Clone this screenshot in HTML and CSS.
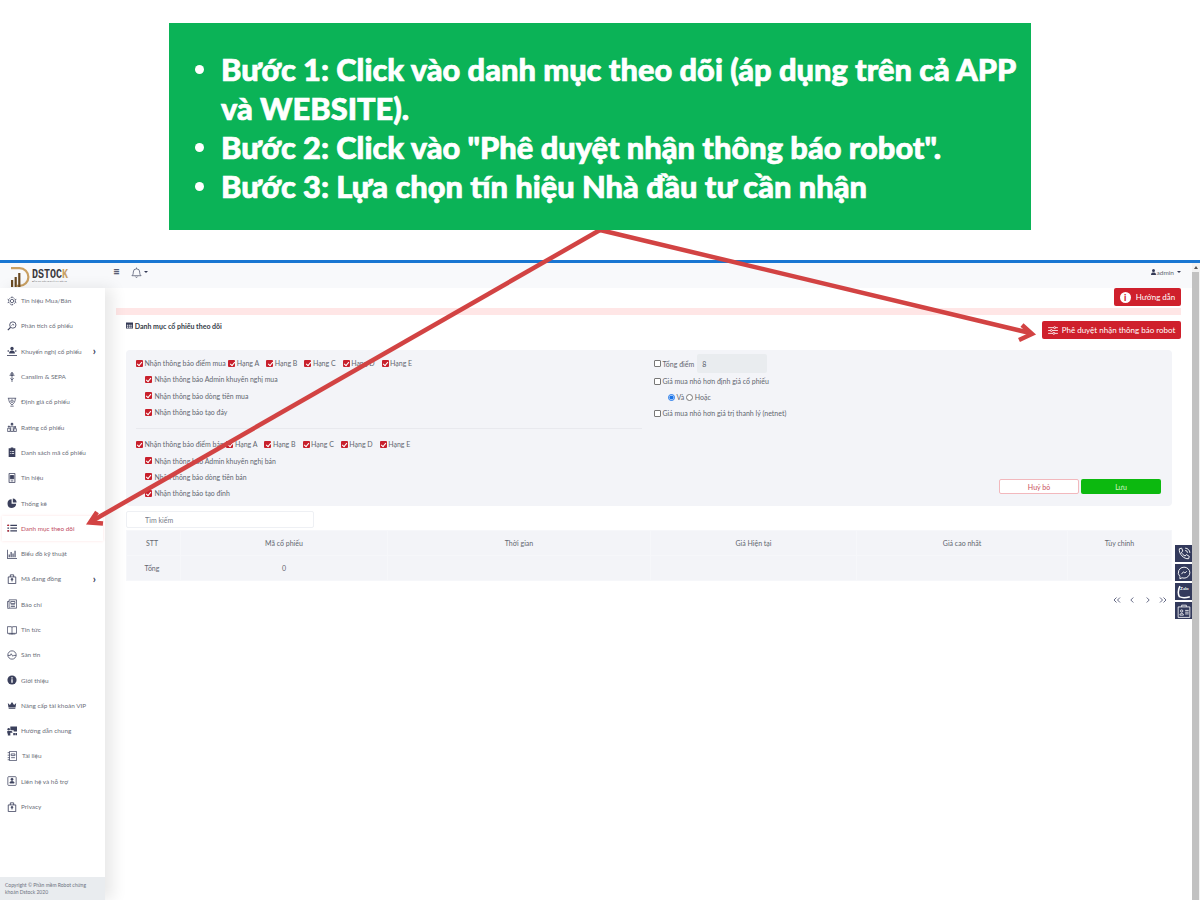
FILE: index.html
```html
<!DOCTYPE html>
<html lang="vi">
<head>
  <meta charset="UTF-8" />
  <title>Danh mục cổ phiếu theo dõi</title>
  <link rel="stylesheet" href="styles.css">
</head>
<body>
  <!-- Green instruction box -->
  <div class="banner">
    <ul>
      <li><span>Bước 1: Click vào danh mục theo dõi (áp dụng trên cả APP và WEBSITE).</span></li>
      <li><span>Bước 2: Click vào "Phê duyệt nhận thông báo robot".</span></li>
      <li><span>Bước 3: Lựa chọn tín hiệu Nhà đầu tư cần nhận</span></li>
    </ul>
  </div>

  <div class="app">
    <div class="app-body">
      <header class="topbar">
        <div class="logo">
          <svg width="21" height="20" viewBox="0 0 21 20">
            <path d="M1 0h8.500a10 10 0 0 1 0 20H7v-2.200h2.500a7.800 7.800 0 0 0 0-15.600H1z" fill="#c9a063"/>
            <path d="M1 13h2.200v7H1zM4.600 10h2.200v10H4.600zM8.200 6h2.200v14H8.200z" fill="#6a4a22"/>
          </svg>
          <div>
            <div class="logo-name">DSTOC<span>K</span></div>
            <div class="logo-tag">ĐẦU TƯ CÙNG THÀNH CÔNG</div>
          </div>
        </div>
        <div class="bars">≡</div>
        <svg class="bell" width="11" height="11" viewBox="0 0 12 12" fill="none" stroke="#4a4f68" stroke-width=".8">
          <path d="M1 9.500c1.200-1 1.500-2 1.500-4a3.500 3.500 0 0 1 7 0c0 2 .3 3 1.500 4zM6 2V.6M4.800 10.500a1.300 1.300 0 0 0 2.400 0"/>
        </svg>
        <span class="caret"></span>
        <div class="admin">
          <svg width="5" height="6" viewBox="0 0 10 12" fill="#343a56"><circle cx="5" cy="3" r="3"/><path d="M0 12c0-4 2-5 5-5s5 1 5 5z"/></svg>
          admin <span class="caret"></span>
        </div>
      </header>

      <div class="columns">
        <nav class="sidebar">
          <ul class="menu">
            <li><svg viewBox="0 0 12 12" fill="none" stroke="#3b405c" stroke-width=".9"><circle cx="6" cy="6" r="2"/><circle cx="6" cy="6" r="4.200" stroke-dasharray="1.500 1"/><path d="M6 .5v2M6 9.500v2M.8 4l2 1M9.200 7l2 1M.8 8l2-1M9.200 5l2-1"/></svg><span>Tín hiệu Mua/Bán</span></li>
            <li><svg viewBox="0 0 12 12" fill="none" stroke="#3b405c" stroke-width="1"><circle cx="7" cy="4.800" r="3.800"/><path d="M4.200 7.600 1 11" stroke-width="1.500"/><path d="M5.500 5.500 7 4l1.500 1"/></svg><span>Phân tích cổ phiếu</span></li>
            <li><svg viewBox="0 0 12 12" fill="#3b405c"><circle cx="6" cy="3" r="2"/><path d="M2.500 9c0-2.500 1.500-3.500 3.500-3.500S9.500 6.500 9.500 9z"/><circle cx="1.500" cy="6" r="1"/><circle cx="10.500" cy="6" r="1"/><path d="M0 11h12v1H0z"/></svg><span>Khuyến nghị cổ phiếu</span><b>›</b></li>
            <li><svg viewBox="0 0 12 12" fill="none" stroke="#3b405c" stroke-width=".9"><path d="M6 0v12M3 4h6M4 7.500l2 2 2-2"/><circle cx="6" cy="2.500" r="1.500"/></svg><span>Canslim &amp; SEPA</span></li>
            <li><svg viewBox="0 0 12 12" fill="none" stroke="#3b405c" stroke-width=".9"><path d="M1 1.500h10M2 1.500c0 4 1.500 6 4 8 2.500-2 4-4 4-8"/><circle cx="6" cy="5" r="1.500"/><path d="M4 11h4"/></svg><span>Định giá cổ phiếu</span></li>
            <li><svg viewBox="0 0 12 12" fill="none" stroke="#3b405c" stroke-width=".9"><path d="M.8 7.500h3v4h-3zM4.500 5h3v6.500h-3zM8.200 8h3v3.500h-3z"/><circle cx="6" cy="2.500" r="1.200" fill="#3b405c"/><circle cx="2.300" cy="5.500" r=".8" fill="#3b405c"/><circle cx="9.700" cy="6" r=".8" fill="#3b405c"/></svg><span>Rating cổ phiếu</span></li>
            <li><svg viewBox="0 0 12 12" fill="#3b405c"><path d="M2 1.500h2.500V.5h3v1H10V12H2z"/><path d="M3.500 5h1v1h-1zM5.500 5h3v1h-3zM3.500 7.500h1v1h-1zM5.500 7.500h3v1h-3z" fill="#fff"/></svg><span>Danh sách mã cổ phiếu</span></li>
            <li><svg viewBox="0 0 12 12" fill="none" stroke="#3b405c" stroke-width="1"><path d="M2.500.5h7v11h-7z"/><path d="M4 3h4v4H4z" fill="#3b405c"/><path d="M4.500 9.500h3"/></svg><span>Tín hiệu</span></li>
            <li><svg viewBox="0 0 12 12" fill="#3b405c"><path d="M5.500 1.500v5.500h5.500A5.200 5.200 0 1 1 5.500 1.500z"/><path d="M7 .5a4.700 4.700 0 0 1 4.500 5H7z"/></svg><span>Thống kê</span></li>
            <li class="active"><svg viewBox="0 0 12 12" fill="#3b405c"><path d="M.5 2h2v1.500h-2zM4 2h8v1.500H4zM.5 5.300h2v1.500h-2zM4 5.300h8v1.500H4zM.5 8.600h2v1.500h-2zM4 8.600h8v1.500H4z"/><path d="M.5 2h2v1.500h-2zM.5 8.600h2v1.500h-2z" fill="#c8202c"/></svg><span>Danh mục theo dõi</span></li>
            <li><svg viewBox="0 0 12 12" fill="#3b405c"><path d="M.3 1h.9v10.200H12v.8H.3zM2 6.500h1.300V10H2zM4.300 3.500h1.300V10H4.300zM6.600 5.500h1.300V10H6.600zM9 2h1.300v8H9z"/></svg><span>Biểu đồ kỹ thuật</span></li>
            <li><svg viewBox="0 0 12 12" fill="none" stroke="#3b405c" stroke-width="1"><path d="M1.500 3.500h9v8h-9z"/><path d="M4 3.500V1h4v2.500"/><circle cx="6" cy="6.300" r="1" fill="#3b405c"/><path d="M6 7v2"/></svg><span>Mã đang đồng</span><b>›</b></li>
            <li><svg viewBox="0 0 12 12" fill="none" stroke="#3b405c" stroke-width=".9"><path d="M2.500 1h9v10h-9zM2.500 3H.5v7a1 1 0 0 0 2 1"/><path d="M4.500 3h5v2.500h-5zM4.500 7h5M4.500 9h5"/></svg><span>Báo chí</span></li>
            <li><svg viewBox="0 0 12 12" fill="none" stroke="#3b405c" stroke-width=".9"><path d="M.5 2h4.500a1 1 0 0 1 1 1 1 1 0 0 1 1-1h4.500v8H7a1 1 0 0 0-1 1 1 1 0 0 0-1-1H.5zM6 3v8M2 10.800h8"/></svg><span>Tin tức</span></li>
            <li><svg viewBox="0 0 12 12" fill="none" stroke="#3b405c" stroke-width=".9"><circle cx="6" cy="6" r="5"/><path d="M1 6.500h3l1-2 2 3 1-1h3"/></svg><span>Sàn tin</span></li>
            <li><svg viewBox="0 0 12 12"><circle cx="6" cy="6" r="5.500" fill="#3b405c"/><path d="M5.200 5.200h1.600v4H5.200zM5.200 2.700h1.600v1.500H5.200z" fill="#fff"/></svg><span>Giới thiệu</span></li>
            <li><svg viewBox="0 0 12 12" fill="#3b405c"><path d="M1 3.500 3.500 6 6 2.500 8.500 6 11 3.500 10.300 9H1.700z"/><path d="M2 9.500h8v1H2z"/></svg><span>Nâng cấp tài khoản VIP</span></li>
            <li><svg viewBox="0 0 12 12" fill="#3b405c"><path d="M4 .5h8v6H8V5H4z"/><circle cx="2" cy="4" r="1.500"/><path d="M.3 6h5L6.500 7v1H4v3.500H1V9H.3zM7.500 8.500h2V11h-2zM10 8.500h2V11h-2z"/></svg><span>Hướng dẫn chung</span></li>
            <li class="shift"><svg viewBox="0 0 12 12" fill="none" stroke="#3b405c" stroke-width=".9"><path d="M3 .5h8.500v11H3zM3 2H.8M3 5H.8M3 8H.8M3 10.500H.8"/><path d="M5 3.500h4.500v2H5zM5 8h4.500"/></svg><span>Tài liệu</span></li>
            <li><svg viewBox="0 0 12 12" fill="none" stroke="#3b405c" stroke-width=".9"><rect x="1" y=".8" width="10" height="10.500" rx="1"/><circle cx="6" cy="4" r="1.300" fill="#3b405c"/><path d="M3.500 8.500c0-1.500 1-2 2.500-2s2.500.5 2.500 2z" fill="#3b405c"/></svg><span>Liên hệ và hỗ trợ</span></li>
            <li><svg viewBox="0 0 12 12" fill="none" stroke="#3b405c" stroke-width="1"><path d="M1.500 3.500h9v8h-9z"/><path d="M4 3.500V1h4v2.500"/><circle cx="6" cy="6.300" r="1" fill="#3b405c"/><path d="M6 7v2"/></svg><span>Privacy</span></li>
          </ul>
          <div class="copyright">Copyright © Phần mềm Robot chứng khoán Dstock 2020</div>
        </nav>

        <main class="content">
          <div class="guide-row">
            <button class="btn-red btn-guide"><i>i</i>Hướng dẫn</button>
          </div>
          <div class="alert-bar"></div>
          <div class="title-row">
            <div class="page-title">
              <svg width="7" height="7" viewBox="0 0 12 12" fill="#343a56"><path d="M0 1h12v10H0zM1.500 4.500v2h2.500v-2zM5.300 4.500v2h2.500v-2zM9 4.500v2h1.500v-2zM1.500 7.700v2h2.500v-2zM5.300 7.700v2h2.500v-2zM9 7.700v2h1.500v-2z" fill-rule="evenodd"/></svg>
              Danh mục cổ phiếu theo dõi
            </div>
            <button class="btn-red btn-approve">
              <svg width="10" height="9" viewBox="0 0 12 11" fill="none" stroke="#fff" stroke-width="1"><path d="M0 2h12M0 5.500h12M0 9h12"/><circle cx="8" cy="2" r="1.200" fill="#cf202c"/><circle cx="4" cy="5.500" r="1.200" fill="#cf202c"/><circle cx="7" cy="9" r="1.200" fill="#cf202c"/></svg>
              Phê duyệt nhận thông báo robot
            </button>
          </div>

          <section class="panel">
            <div class="panel-left">
              <div class="check-row grades">
                <label><input type="checkbox" checked>Nhận thông báo điểm mua</label>
                <label><input type="checkbox" checked>Hạng A</label>
                <label><input type="checkbox" checked>Hạng B</label>
                <label><input type="checkbox" checked>Hạng C</label>
                <label><input type="checkbox" checked>Hạng D</label>
                <label><input type="checkbox" checked>Hạng E</label>
              </div>
              <div class="check-row sub"><label><input type="checkbox" checked>Nhận thông báo Admin khuyến nghị mua</label></div>
              <div class="check-row sub"><label><input type="checkbox" checked>Nhận thông báo dòng tiền mua</label></div>
              <div class="check-row sub"><label><input type="checkbox" checked>Nhận thông báo tạo đáy</label></div>
              <hr>
              <div class="check-row grades">
                <label><input type="checkbox" checked>Nhận thông báo điểm bán</label>
                <label><input type="checkbox" checked>Hạng A</label>
                <label><input type="checkbox" checked>Hạng B</label>
                <label><input type="checkbox" checked>Hạng C</label>
                <label><input type="checkbox" checked>Hạng D</label>
                <label><input type="checkbox" checked>Hạng E</label>
              </div>
              <div class="check-row sub"><label><input type="checkbox" checked>Nhận thông báo Admin khuyến nghị bán</label></div>
              <div class="check-row sub"><label><input type="checkbox" checked>Nhận thông báo dòng tiền bán</label></div>
              <div class="check-row sub"><label><input type="checkbox" checked>Nhận thông báo tạo đỉnh</label></div>
            </div>
            <div class="panel-right">
              <div class="check-row score"><label><input type="checkbox">Tổng điểm</label><input class="score-input" type="text" value="8" disabled></div>
              <div class="check-row"><label><input type="checkbox">Giá mua nhỏ hơn định giá cổ phiếu</label></div>
              <div class="check-row radios">
                <label><input type="radio" name="logic" checked>Và</label>
                <label><input type="radio" name="logic">Hoặc</label>
              </div>
              <div class="check-row"><label><input type="checkbox">Giá mua nhỏ hơn giá trị thanh lý (netnet)</label></div>
              <div class="actions">
                <button class="btn-cancel">Huỷ bỏ</button>
                <button class="btn-save">Lưu</button>
              </div>
            </div>
          </section>

          <input class="search" type="text" placeholder="Tìm kiếm">

          <table class="stocks">
            <tr><th>STT</th><th>Mã cổ phiếu</th><th>Thời gian</th><th>Giá Hiện tại</th><th>Giá cao nhất</th><th>Tùy chỉnh</th></tr>
            <tr><td>Tổng</td><td>0</td><td></td><td></td><td></td><td></td></tr>
          </table>

          <div class="pager">
            <svg viewBox="0 0 8 6"><path d="M3.500.5 1 3l2.500 2.500M7 .5 4.500 3 7 5.500"/></svg>
            <svg viewBox="0 0 8 6"><path d="M5.300.5 2.800 3l2.500 2.500"/></svg>
            <svg viewBox="0 0 8 6"><path d="M2.700.5 5.200 3 2.700 5.500"/></svg>
            <svg viewBox="0 0 8 6"><path d="M1 .5 3.500 3 1 5.500M4.500.5 7 3 4.500 5.500"/></svg>
          </div>
        </main>
      </div>
    </div>
    <div class="scrollbar"><div class="scroll-thumb"></div></div>

    <!-- Contact buttons stuck to the right edge -->
    <div class="float-btns">
      <a><svg viewBox="0 0 12 12" fill="none" stroke="#fff" stroke-width=".8"><path d="M2 1.500 4 1l1 2.500-1.200 1c.6 1.500 1.700 2.600 3.200 3.200l1-1.200L10.500 8 10 10c-4 .6-8.600-4-8-8.500zM7 1a4 4 0 0 1 4 4M7 3a2 2 0 0 1 2 2"/></svg></a>
      <a><svg viewBox="0 0 12 12" fill="none" stroke="#fff" stroke-width=".8"><path d="M6 1a5 4.700 0 0 1 0 9.400c-.6 0-1.200-.1-1.700-.3L2.500 11V9A4.700 4.700 0 0 1 6 1z"/><path d="M3.800 7 5.500 5l1.300 1 1.500-1.500"/></svg></a>
      <a class="zalo"><svg viewBox="0 0 12 12" fill="none" stroke="#fff" stroke-width="1.300"><path d="M2.500 1C1 4 1 8 2 10c2 1 6 1 9 0"/></svg><em>Zalo</em></a>
      <a><svg viewBox="0 0 12 12" fill="none" stroke="#fff" stroke-width=".7"><path d="M1 2.500h10v9H1zM4 2.500V1h4v1.500"/><circle cx="4" cy="6" r="1"/><path d="M2.500 9.500c0-1 .6-1.500 1.500-1.500s1.500.5 1.500 1.500zM7 5.500h3M7 7h3M7 8.500h3"/></svg></a>
    </div>
  </div>

  <!-- Red arrows drawn over everything but the green box -->
  <svg class="arrows" width="1200" height="900" viewBox="0 0 1200 900" fill="none" stroke="#d24343" stroke-width="4.500">
    <path d="M600 230 92 521"/>
    <path d="M97 512 90 522.500 103 523.500" stroke-linejoin="miter"/>
    <path d="M600 230 1030 333"/>
    <path d="M1022 325 1032 334 1019 340"/>
  </svg>
</body>
</html>
```
FILE: styles.css
```css
* {
  box-sizing: border-box;
}

html,
body {
  height: 900px;
}

body {
  margin: 0;
  background: #fff;
  font-family: 'Lato', 'Noto Sans', sans-serif;
  overflow: hidden;
  position: relative;
  display: flex;
  flex-direction: column;
}

/* Banner */
.banner {
  position: relative;
  z-index: 3;
  width: 862px;
  height: 207px;
  margin: 23px auto 0;
  padding: 27px 0 0 26px;
  background: #0bb357;
  color: #fff;
  font-size: 30.800px;
  font-weight: 900;
  line-height: 39px;
  -webkit-text-stroke: 0.7px #fff;
}

.banner ul {
  margin: 0;
  padding: 0;
  list-style: none;
}

.banner li {
  display: flex;
  gap: 17px;
}

.banner li::before {
  content: '';
  flex: 0 0 9px;
  height: 9px;
  margin-top: 15px;
  border-radius: 50%;
  background: #fff;
}

/* App screenshot */
.app {
  position: relative;
  display: flex;
  flex: 1;
  margin-top: 30px;
  border-top: 3px solid #1976d2;
  min-height: 0;
  font-size: 7px;
  color: #62666f;
}

.app-body {
  display: flex;
  flex-direction: column;
  flex: 1;
  min-width: 0;
}

.scrollbar {
  position: relative;
  flex: 0 0 8px;
  padding-top: 9px;
  background: #f1f1f1;
}

.scrollbar::before {
  content: '';
  position: absolute;
  top: 3px;
  left: 2px;
  border-bottom: 3px solid #555;
  border-left: 2px solid transparent;
  border-right: 2px solid transparent;
}

.scroll-thumb {
  width: 7px;
  height: 100%;
  background: #c1c1c1;
}

.topbar {
  display: flex;
  align-items: center;
  height: 25px;
  padding: 0 11px 7px 10px;
  background: #f8f9fb;
}

.logo {
  display: flex;
  align-items: center;
  align-self: flex-end;
  gap: 1px;
  width: 103px;
  margin-bottom: -6px;
}

.logo-name {
  font-family: 'Liberation Mono', monospace;
  font-size: 12.500px;
  font-weight: 700;
  line-height: 10px;
  color: #3b3a40;
  transform: scaleX(0.8);
  transform-origin: left center;
}

.logo-name span {
  color: #c9a063;
}

.logo-tag {
  font-size: 2.500px;
  line-height: 4px;
  color: #666;
}

.bars {
  width: 18px;
  font-size: 12px;
  line-height: 12px;
  color: #343a56;
}

.caret {
  display: inline-block;
  margin-left: 2px;
  border-top: 2px solid #343a56;
  border-left: 2px solid transparent;
  border-right: 2px solid transparent;
}

.admin {
  margin-left: auto;
  font-size: 6.500px;
  display: flex;
  align-items: center;
  gap: 1px;
}

.columns {
  display: flex;
  flex: 1;
  min-height: 0;
}

/* Sidebar */
.sidebar {
  position: relative;
  z-index: 1;
  display: flex;
  flex-direction: column;
  flex: 0 0 105px;
  background: #fff;
  box-shadow: 8px 0 14px rgba(0, 0, 0, 0.09);
}

.menu {
  flex: 1;
  margin: 0;
  padding: 0;
  list-style: none;
}

.menu li {
  display: flex;
  align-items: center;
  gap: 4px;
  height: 25.300px;
  padding-left: 7px;
  font-size: 6.400px;
  color: #6b6f7a;
}

.menu li svg {
  flex: 0 0 10px;
  width: 10px;
  height: 10px;
}

.menu li b {
  margin-left: auto;
  margin-right: 9px;
  font-size: 11px;
  line-height: 8px;
  color: #343a56;
}

.menu li.shift {
  gap: 5px;
}

.menu li.active {
  margin: 0 2px;
  padding-left: 5px;
  background: #fff;
  box-shadow: 0 0 3px #fde3e3;
  color: #c04a5e;
}

.copyright {
  height: 23px;
  padding: 5px;
  background: #e9ecef;
  font-size: 5px;
  line-height: 7px;
  color: #6d7280;
}

/* Main content */
.content {
  flex: 1;
  min-width: 0;
  padding: 0 11px;
}

.guide-row {
  display: flex;
  justify-content: flex-end;
}

.btn-red {
  display: flex;
  align-items: center;
  justify-content: center;
  height: 18px;
  padding: 0;
  border: 0;
  border-radius: 2px;
  background: #cf202c;
  color: #fff;
  font-family: inherit;
  font-size: 8px;
}

.btn-guide {
  width: 67px;
  gap: 5px;
}

.btn-guide i {
  width: 11px;
  height: 11px;
  border-radius: 50%;
  background: #fff;
  color: #cf202c;
  font-size: 9px;
  font-style: normal;
  font-weight: 900;
  line-height: 11px;
  text-align: center;
}

.alert-bar {
  height: 7px;
  margin-top: 2px;
  background: #ffe6e6;
}

.title-row {
  display: flex;
  align-items: flex-start;
  justify-content: space-between;
  margin-top: 6px;
  padding-left: 10px;
}

.page-title {
  margin-top: 1px;
  font-size: 7px;
  font-weight: 700;
  line-height: 9px;
  color: #343a46;
}

.btn-approve {
  width: 139px;
  gap: 4px;
}

.panel {
  display: flex;
  height: 156px;
  margin: 11px 9px 5px 10px;
  padding: 5px 11px 5px 10px;
  border-radius: 4px;
  background: #f3f4f8;
}

.panel-left {
  flex: 0 0 506px;
}

.panel-right {
  display: flex;
  flex: 1;
  flex-direction: column;
  margin: -1px 0 0 12px;
}

.check-row {
  display: flex;
  align-items: center;
  gap: 7px;
  height: 16px;
  white-space: nowrap;
}

.panel-left .check-row {
  height: 16.300px;
}

.check-row.sub {
  padding-left: 9px;
  font-size: 6.900px;
}

.check-row label {
  display: flex;
  align-items: center;
  gap: 1.500px;
}

.check-row.sub label {
  gap: 2.500px;
}

.grades label:first-child {
  margin-right: -4.500px;
}

.check-row input[type='checkbox'] {
  appearance: none;
  position: relative;
  width: 7px;
  height: 7px;
  margin: 0;
  border: 0.7px solid #777;
  border-radius: 1px;
  background: #fff;
}

.check-row input[type='checkbox']:checked {
  border: 0;
  background: #c8202c;
}

.check-row input[type='checkbox']:checked::after {
  content: '';
  position: absolute;
  top: 1px;
  left: 2.300px;
  width: 2.400px;
  height: 4px;
  border-right: 1px solid #fff;
  border-bottom: 1px solid #fff;
  transform: rotate(40deg);
}

.check-row input[type='radio'] {
  width: 7px;
  height: 7px;
  margin: 0;
  accent-color: #1a73e8;
}

.panel hr {
  height: 1px;
  margin: 7.500px 0;
  border: 0;
  background: #e8e9ee;
}

.check-row.score {
  gap: 3px;
  height: 19px;
}

.score-input {
  width: 70px;
  height: 19px;
  padding: 0 5px;
  border: 0;
  border-radius: 2px;
  background: #e9ecef;
  color: #555a68;
  font-family: inherit;
  font-size: 7px;
}

.check-row.radios {
  gap: 2px;
  padding-left: 14px;
}

.actions {
  display: flex;
  justify-content: flex-end;
  gap: 2px;
  margin-top: auto;
  margin-bottom: 7px;
}

.actions button {
  width: 80px;
  height: 15px;
  padding: 0;
  border-radius: 2px;
  font-family: inherit;
  font-size: 7px;
}

.btn-cancel {
  border: 1px solid #f2b8bd;
  background: #fff;
  color: #c9505c;
}

.btn-save {
  border: 0;
  background: #0cb90f;
  color: #d8f5c8;
}

.search {
  display: block;
  width: 188px;
  height: 17px;
  margin-left: 10px;
  padding: 0 18px;
  border: 1px solid #eef0f4;
  border-radius: 2px;
  background: #fff;
  font-family: inherit;
  font-size: 7px;
}

.search::placeholder {
  color: #777c88;
}

.stocks {
  width: 1046px;
  height: 51px;
  margin: 2px 0 0 10px;
  border-collapse: collapse;
  table-layout: fixed;
  background: #f3f4f8;
}

.stocks th,
.stocks td {
  padding: 0;
  border: 1px solid #f6f7fa;
  font-weight: 400;
  text-align: center;
}

.stocks th:first-child,
.stocks td:first-child {
  padding-right: 3px;
}

.stocks th:nth-child(1) { width: 54px; }
.stocks th:nth-child(2) { width: 207px; }
.stocks th:nth-child(3) { width: 263px; }
.stocks th:nth-child(4) { width: 206px; }
.stocks th:nth-child(5) { width: 211px; }

.pager {
  display: flex;
  justify-content: flex-end;
  gap: 7.500px;
  margin: 16px 14px 0 0;
}

.pager svg {
  width: 8px;
  height: 6px;
  fill: none;
  stroke: #555a78;
  stroke-width: 0.9;
}

/* Floating contact buttons */
.float-btns {
  position: absolute;
  top: 282px;
  right: 8px;
  z-index: 2;
  display: flex;
  flex-direction: column;
  gap: 2px;
}

.float-btns a {
  position: relative;
  display: flex;
  align-items: center;
  justify-content: center;
  width: 17px;
  height: 17px;
  background: #333a5c;
}

.float-btns svg {
  width: 14px;
  height: 14px;
}

.float-btns em {
  position: absolute;
  top: 3px;
  left: 5px;
  color: #fff;
  font-size: 4.500px;
  font-style: normal;
  font-weight: 700;
}

/* Overlay */
.arrows {
  position: absolute;
  top: 0;
  left: 0;
  z-index: 2;
  pointer-events: none;
}
```
